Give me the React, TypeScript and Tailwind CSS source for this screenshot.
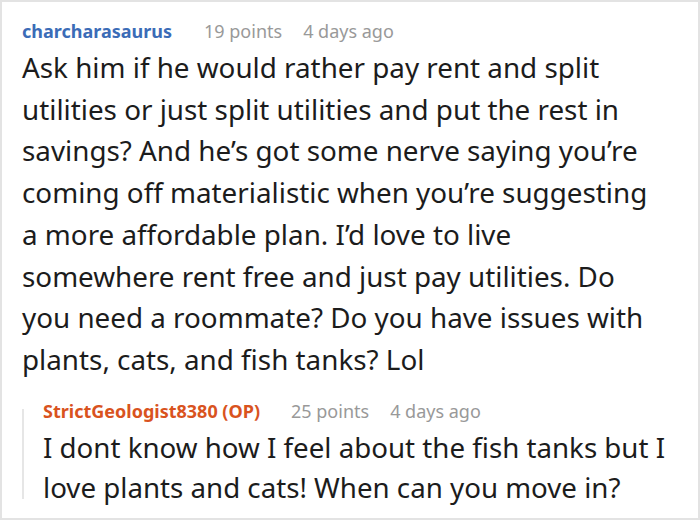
const mainLines = [
  "Ask him if he would rather pay rent and split",
  "utilities or just split utilities and put the rest in",
  "savings? And he’s got some nerve saying you’re",
  "coming off materialistic when you’re suggesting",
  "a more affordable plan. I’d love to live",
  "somewhere rent free and just pay utilities. Do",
  "you need a roommate? Do you have issues with",
  "plants, cats, and fish tanks? Lol",
];

const replyLines = [
  "I dont know how I feel about the fish tanks but I",
  "love plants and cats! When can you move in?",
];

export default function App() {
  return (
    <div className="w-[700px] h-[520px] bg-white border-2 border-[#e3e3e3] overflow-hidden font-['Noto_Sans',sans-serif]">
      <div className="pl-[20px] pt-[14px]">
        {/* top comment */}
        <div className="flex items-baseline text-[18px] leading-[30px]">
          <span className="font-bold text-[#3b6cb7]">charcharasaurus</span>
          <span className="ml-[32px] text-[#999999]">19 points</span>
          <span className="ml-[21px] text-[#999999]">4 days ago</span>
        </div>
        <div className="mt-[1px] text-[27.8px] leading-[41.7px] text-[#1c1c1c] whitespace-nowrap">
          {mainLines.map((l) => (
            <p key={l}>{l}</p>
          ))}
        </div>

        {/* reply */}
        <div className="mt-[17px] flex">
          <div className="w-[2px] bg-[#e6e6e6] mt-[11px] mb-[8px]"></div>
          <div className="pl-[19px]">
            <div className="flex items-baseline text-[18px] leading-[26px]">
              <span className="font-bold text-[#d9531e]">StrictGeologist8380 (OP)</span>
              <span className="ml-[31px] text-[#999999]">25 points</span>
              <span className="ml-[21px] text-[#999999]">4 days ago</span>
            </div>
            <div className="mt-[3px] text-[27.7px] leading-[40px] text-[#1c1c1c] whitespace-nowrap">
              {replyLines.map((l) => (
                <p key={l}>{l}</p>
              ))}
            </div>
          </div>
        </div>
      </div>
    </div>
  );
}
